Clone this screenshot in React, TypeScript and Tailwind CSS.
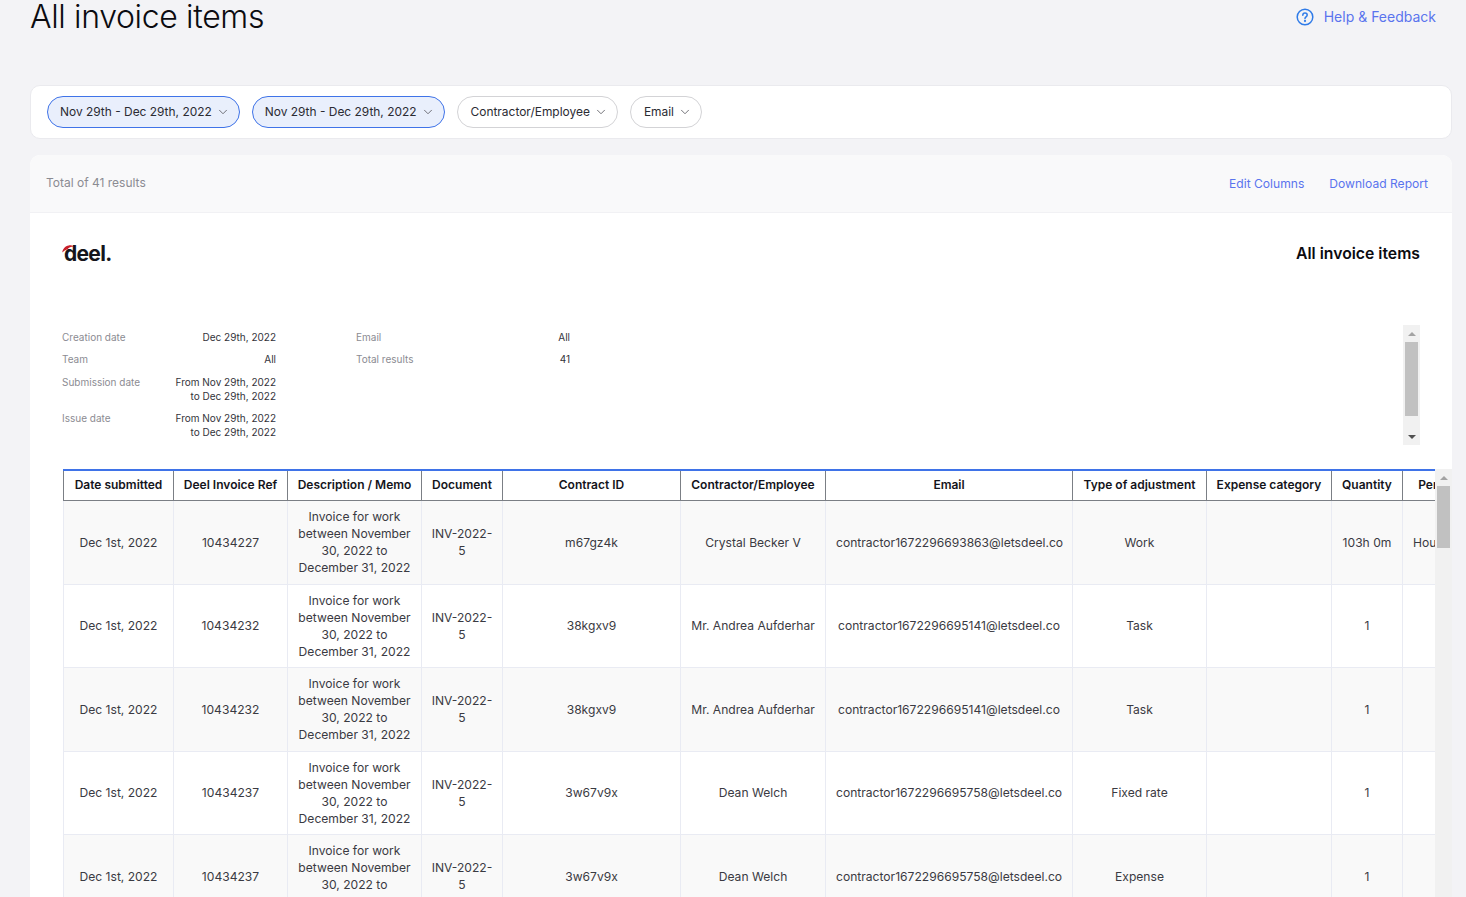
import { ChevronDown } from 'lucide-react';

const COLUMNS = [
  { label: 'Date submitted', width: 'w-[110px]' },
  { label: 'Deel Invoice Ref', width: 'w-[114px]' },
  { label: 'Description / Memo', width: 'w-[134px]' },
  { label: 'Document', width: 'w-[81px]' },
  { label: 'Contract ID', width: 'w-[178px]' },
  { label: 'Contractor/Employee', width: 'w-[145px]' },
  { label: 'Email', width: 'w-[247px]' },
  { label: 'Type of adjustment', width: 'w-[134px]' },
  { label: 'Expense category', width: 'w-[125px]' },
  { label: 'Quantity', width: 'w-[71px]' },
  { label: 'Per unit', width: 'w-[76px]' },
];

const ROWS = [
  ['10434227', 'm67gz4k', 'Crystal Becker V', 'contractor1672296693863@letsdeel.co', 'Work', '103h 0m', 'Hourly'],
  ['10434232', '38kgxv9', 'Mr. Andrea Aufderhar', 'contractor1672296695141@letsdeel.co', 'Task', '1', ''],
  ['10434232', '38kgxv9', 'Mr. Andrea Aufderhar', 'contractor1672296695141@letsdeel.co', 'Task', '1', ''],
  ['10434237', '3w67v9x', 'Dean Welch', 'contractor1672296695758@letsdeel.co', 'Fixed rate', '1', ''],
  ['10434237', '3w67v9x', 'Dean Welch', 'contractor1672296695758@letsdeel.co', 'Expense', '1', ''],
];

function Pill({ label, active }: { label: string; active?: boolean }) {
  return (
    <button
      className={
        'h-[32px] pr-[9px] rounded-full border flex items-center gap-[4px] text-[11.95px] text-[#2b2b33] ' +
        (active ? 'pl-[12px] border-[#3f73e8] bg-[#e9effc]' : 'pl-[13px] border-[#d3d3d6] bg-white')
      }
    >
      <span>{label}</span>
      <ChevronDown className="w-[14px] h-[14px] text-[#5f5f66]" strokeWidth={1.5} />
    </button>
  );
}

function Scrollbar({ thumb }: { thumb: string }) {
  return (
    <div className="w-[17px] bg-[#f1f1f1] flex flex-col items-center shrink-0">
      <div className="h-[17px] w-full flex items-center justify-center shrink-0">
        <div className="w-0 h-0 border-x-[4px] border-x-transparent border-b-[4px] border-b-[#a3a3a3]" />
      </div>
      <div className={'w-[13px] bg-[#c1c1c1] shrink-0 ' + thumb} />
      <div className="flex-1" />
    </div>
  );
}

function Meta({ label, children }: { label: string; children: React.ReactNode }) {
  return (
    <div className="flex justify-between leading-[14px] text-[10px]">
      <span className="text-[#8b8b92]">{label}</span>
      <span className="text-right text-[#33333a]">{children}</span>
    </div>
  );
}

function Logo() {
  return (
    <div className="relative w-[50px] h-[24px]">
      <span className="absolute left-[2px] top-0 text-[21px] leading-[24px] font-bold tracking-[-0.7px] text-[#15151c]">deel.</span>
      <svg viewBox="0 0 12 8" className="absolute left-0 top-[3px] w-[12px] h-[8px]">
        <path d="M0.3 7.6C.6 4 3 .8 6.8.4 8.8.2 10.4.7 11.6 1.6 9 1.7 6.8 2.6 5.6 4.2 3.6 4.6 1.8 5.8.3 7.6z" fill="#c8202b" />
      </svg>
    </div>
  );
}

const cell = 'border border-[#e9ebf3] px-[10px] py-[7.25px]';

export default function App() {
  return (
    <div className="h-[897px] overflow-hidden bg-[#f3f3f6] pl-[30px] pr-[14px] font-['Inter',sans-serif]">
      <div className="flex justify-between items-start h-[85px] pr-[16px]">
        <h1 className="text-[32px] leading-[34px] font-light tracking-[-0.35px] text-[#0b0b10]">All invoice items</h1>
        <a className="flex items-center gap-[10px] mt-[8px] text-[14px] leading-[18px] text-[#5a74ee]">
          <svg viewBox="0 0 18 18" className="w-[18px] h-[18px]" fill="none" stroke="#2f7be8" strokeWidth="1.5">
            <circle cx="9" cy="9" r="7.8" />
            <path d="M6.8 7.2c0-1.3 1-2.2 2.2-2.2s2.2.9 2.2 2c0 1.9-2.2 1.8-2.2 3.6" strokeLinecap="round" />
            <circle cx="9" cy="13" r=".4" />
          </svg>
          Help &amp; Feedback
        </a>
      </div>

      <div className="w-[1422px] h-[54px] bg-white border border-[#eaeaee] rounded-[10px] flex items-center gap-[12px] px-[16px]">
        <Pill label="Nov 29th - Dec 29th, 2022" active />
        <Pill label="Nov 29th - Dec 29th, 2022" active />
        <Pill label="Contractor/Employee" />
        <Pill label="Email" />
      </div>

      <div className="w-[1422px] mt-[16px] rounded-t-[10px] overflow-hidden bg-white">
        <div className="h-[58px] bg-[#f9f9fa] border-b border-[#f1f1f4] flex items-center justify-between pl-[16px] pr-[24px]">
          <span className="text-[12px] text-[#8b8b92] mb-[2px]">Total of 41 results</span>
          <div className="flex gap-[25px] text-[12.1px] text-[#5a74ee] mt-[1px]">
            <a>Edit Columns</a>
            <a>Download Report</a>
          </div>
        </div>

        <div className="px-[32px] pt-[29px] flex items-center justify-between h-[82px] pb-[29px]">
          <Logo />
          <span className="text-[15.75px] font-semibold text-[#0b0b10]">All invoice items</span>
        </div>

        <div className="px-[32px] pt-[30px] flex h-[174px]">
          <div className="w-[214px] flex flex-col gap-[8px] pt-[5px]">
            <Meta label="Creation date">Dec 29th, 2022</Meta>
            <Meta label="Team">All</Meta>
            <div className="mt-[1px] flex flex-col gap-[8px]">
              <Meta label="Submission date">From Nov 29th, 2022<br />to Dec 29th, 2022</Meta>
              <Meta label="Issue date">From Nov 29th, 2022<br />to Dec 29th, 2022</Meta>
            </div>
          </div>
          <div className="w-[214px] ml-[80px] flex flex-col gap-[8px] pt-[5px]">
            <Meta label="Email">All</Meta>
            <Meta label="Total results">41</Meta>
          </div>
          <div className="flex-1 flex justify-end">
            <div className="w-[17px] h-[120px] bg-[#f1f1f1] flex flex-col items-center">
              <div className="h-[17px] w-full flex items-center justify-center">
                <div className="w-0 h-0 border-x-[4px] border-x-transparent border-b-[4px] border-b-[#a3a3a3]" />
              </div>
              <div className="w-[13px] h-[74px] bg-[#c1c1c1]" />
              <div className="flex-1" />
              <div className="h-[17px] w-full flex items-center justify-center">
                <div className="w-0 h-0 border-x-[4px] border-x-transparent border-t-[4px] border-t-[#505050]" />
              </div>
            </div>
          </div>
        </div>

        <div className="pl-[33px] flex items-stretch">
          <div className="w-[1372px] overflow-hidden shrink-0">
            <table className="table-fixed border-collapse w-[1415px] text-[12.1px] leading-[17px] text-center">
              <thead>
                <tr>
                  {COLUMNS.map(c => (
                    <th key={c.label} className={'h-[30.5px] p-0 pb-[2px] font-semibold text-[12px] whitespace-nowrap text-[#14141b] border border-[#7b7f85] border-t-[#3f73e8] border-t-2 ' + c.width}>
                      {c.label}
                    </th>
                  ))}
                </tr>
              </thead>
              <tbody className="text-[#3a3a42]">
                {ROWS.map((r, i) => (
                  <tr key={i} className={i % 2 === 0 ? 'bg-[#f9f9f9]' : 'bg-white'}>
                    <td className={cell}>Dec 1st, 2022</td>
                    <td className={cell}>{r[0]}</td>
                    <td className={cell}>Invoice for work between November 30, 2022 to December 31, 2022</td>
                    <td className="border border-[#e9ebf3] px-[8px] py-[7.25px]">INV-2022-<br />5</td>
                    <td className={cell}>{r[1]}</td>
                    <td className={cell}>{r[2]}</td>
                    <td className={cell}>{r[3]}</td>
                    <td className={cell}>{r[4]}</td>
                    <td className={cell}></td>
                    <td className={cell}>{r[5]}</td>
                    <td className={cell + ' text-left whitespace-nowrap'}>{r[6]}</td>
                  </tr>
                ))}
              </tbody>
            </table>
          </div>
          <Scrollbar thumb="h-[62px]" />
        </div>
      </div>
    </div>
  );
}
